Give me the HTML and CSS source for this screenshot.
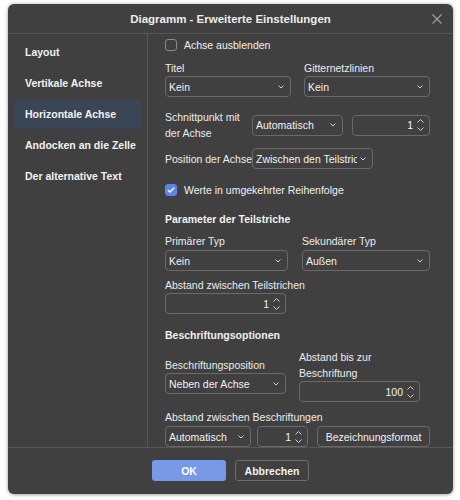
FILE: index.html
```html
<!DOCTYPE html>
<html lang="de">
<head>
<meta charset="utf-8">
<title>Diagramm - Erweiterte Einstellungen</title>
<link rel="stylesheet" href="styles.css">
</head>
<body>
<div class="dialog">
  <div class="header">
    <div class="title">Diagramm - Erweiterte Einstellungen</div>
    <svg class="close" width="10" height="10" viewBox="0 0 10 10"><path d="M0.5 0.5L9.5 9.5M9.5 0.5L0.5 9.5" stroke="#a0a0a0" stroke-width="1.2"/></svg>
  </div>
  <div class="main">
    <div class="sidebar">
      <div class="nav">Layout</div>
      <div class="nav">Vertikale Achse</div>
      <div class="nav active">Horizontale Achse</div>
      <div class="nav">Andocken an die Zelle</div>
      <div class="nav">Der alternative Text</div>
    </div>
    <div class="content">
      <div class="check-row first"><span class="cb"></span><span>Achse ausblenden</span></div>

      <div class="two-col g1">
        <div class="field w126">
          <div class="label">Titel</div>
          <div class="select"><span class="val">Kein</span><svg class="chev" width="6" height="4" viewBox="0 0 6 4"><path d="M0.5 0.5L3 3L5.5 0.5" fill="none" stroke="#cfcfcf" stroke-width="1"/></svg></div>
        </div>
        <div class="field w126">
          <div class="label">Gitternetzlinien</div>
          <div class="select"><span class="val">Kein</span><svg class="chev" width="6" height="4" viewBox="0 0 6 4"><path d="M0.5 0.5L3 3L5.5 0.5" fill="none" stroke="#cfcfcf" stroke-width="1"/></svg></div>
        </div>
      </div>

      <div class="inline-row r1">
        <div class="ilabel">Schnittpunkt mit der Achse</div>
        <div class="select w91"><span class="val">Automatisch</span><svg class="chev" width="6" height="4" viewBox="0 0 6 4"><path d="M0.5 0.5L3 3L5.5 0.5" fill="none" stroke="#cfcfcf" stroke-width="1"/></svg></div>
        <div class="spin w78"><span class="num">1</span><span class="arrows"><svg width="7" height="4" viewBox="0 0 7 4"><path d="M0.5 3.5L3.5 0.5L6.5 3.5" fill="none" stroke="#cfcfcf" stroke-width="1"/></svg><svg width="7" height="4" viewBox="0 0 7 4"><path d="M0.5 0.5L3.5 3.5L6.5 0.5" fill="none" stroke="#cfcfcf" stroke-width="1"/></svg></span></div>
      </div>

      <div class="inline-row r2">
        <div class="ilabel nowrap">Position der Achse</div>
        <div class="select w121"><span class="val">Zwischen den Teilstrichen</span><svg class="chev" width="6" height="4" viewBox="0 0 6 4"><path d="M0.5 0.5L3 3L5.5 0.5" fill="none" stroke="#cfcfcf" stroke-width="1"/></svg></div>
      </div>

      <div class="check-row c2"><span class="cb checked"><svg width="8" height="6" viewBox="0 0 8 6"><path d="M0.8 3L3 5L7.2 0.8" fill="none" stroke="#fff" stroke-width="1.4"/></svg></span><span>Werte in umgekehrter Reihenfolge</span></div>

      <div class="heading h1">Parameter der Teilstriche</div>

      <div class="two-col g2">
        <div class="field w123">
          <div class="label">Primärer Typ</div>
          <div class="select"><span class="val">Kein</span><svg class="chev" width="6" height="4" viewBox="0 0 6 4"><path d="M0.5 0.5L3 3L5.5 0.5" fill="none" stroke="#cfcfcf" stroke-width="1"/></svg></div>
        </div>
        <div class="field w128">
          <div class="label">Sekundärer Typ</div>
          <div class="select"><span class="val">Außen</span><svg class="chev" width="6" height="4" viewBox="0 0 6 4"><path d="M0.5 0.5L3 3L5.5 0.5" fill="none" stroke="#cfcfcf" stroke-width="1"/></svg></div>
        </div>
      </div>

      <div class="field w121 f3">
        <div class="label">Abstand zwischen Teilstrichen</div>
        <div class="spin"><span class="num">1</span><span class="arrows"><svg width="7" height="4" viewBox="0 0 7 4"><path d="M0.5 3.5L3.5 0.5L6.5 3.5" fill="none" stroke="#cfcfcf" stroke-width="1"/></svg><svg width="7" height="4" viewBox="0 0 7 4"><path d="M0.5 0.5L3.5 3.5L6.5 0.5" fill="none" stroke="#cfcfcf" stroke-width="1"/></svg></span></div>
      </div>

      <div class="heading h2">Beschriftungsoptionen</div>

      <div class="two-col g3">
        <div class="field w121">
          <div class="label tall">Beschriftungsposition</div>
          <div class="select"><span class="val">Neben der Achse</span><svg class="chev" width="6" height="4" viewBox="0 0 6 4"><path d="M0.5 0.5L3 3L5.5 0.5" fill="none" stroke="#cfcfcf" stroke-width="1"/></svg></div>
        </div>
        <div class="field w121">
          <div class="label tall">Abstand bis zur<br>Beschriftung</div>
          <div class="spin"><span class="num">100</span><span class="arrows"><svg width="7" height="4" viewBox="0 0 7 4"><path d="M0.5 3.5L3.5 0.5L6.5 3.5" fill="none" stroke="#cfcfcf" stroke-width="1"/></svg><svg width="7" height="4" viewBox="0 0 7 4"><path d="M0.5 0.5L3.5 3.5L6.5 0.5" fill="none" stroke="#cfcfcf" stroke-width="1"/></svg></span></div>
        </div>
      </div>

      <div class="label l4">Abstand zwischen Beschriftungen</div>
      <div class="last-row">
        <div class="select w86"><span class="val">Automatisch</span><svg class="chev" width="6" height="4" viewBox="0 0 6 4"><path d="M0.5 0.5L3 3L5.5 0.5" fill="none" stroke="#cfcfcf" stroke-width="1"/></svg></div>
        <div class="spin w51"><span class="num">1</span><span class="arrows"><svg width="7" height="4" viewBox="0 0 7 4"><path d="M0.5 3.5L3.5 0.5L6.5 3.5" fill="none" stroke="#cfcfcf" stroke-width="1"/></svg><svg width="7" height="4" viewBox="0 0 7 4"><path d="M0.5 0.5L3.5 3.5L6.5 0.5" fill="none" stroke="#cfcfcf" stroke-width="1"/></svg></span></div>
        <div class="btn-plain">Bezeichnungsformat</div>
      </div>
    </div>
  </div>
  <div class="footer">
    <div class="btn ok">OK</div>
    <div class="btn cancel">Abbrechen</div>
  </div>
</div>
</body>
</html>
```

FILE: styles.css
```css
* { box-sizing: border-box; }
html, body { margin: 0; padding: 0; background: #ffffff; }
body {
  font-family: "Liberation Sans", Arial, sans-serif;
  font-size: 10.5px;
  color: #f0f0f0;
  width: 460px;
  height: 500px;
  overflow: hidden;
}
.dialog {
  margin: 4px 0 0 8px;
  width: 445px;
  height: 490px;
  background: #404040;
  border-radius: 6px;
  box-shadow: 0 0 4px rgba(0,0,0,0.25), 0 1px 3px rgba(0,0,0,0.2);
  display: flex;
  flex-direction: column;
  overflow: hidden;
}
.header {
  height: 30px;
  border-bottom: 1px solid #565656;
  position: relative;
  display: flex;
  align-items: center;
  justify-content: center;
  flex: none;
}
.title {
  font-weight: bold;
  font-size: 11.5px;
  color: #ececec;
}
.close {
  position: absolute;
  right: 11px;
  top: 10px;
}
.main {
  flex: 1;
  display: flex;
  min-height: 0;
}
.sidebar {
  width: 140px;
  flex: none;
  border-right: 1px solid #565656;
  padding: 4px 5px 0 6px;
  display: flex;
  flex-direction: column;
  gap: 2px;
}
.nav {
  height: 29px;
  line-height: 29px;
  padding-left: 11px;
  font-weight: bold;
  font-size: 10.5px;
  color: #f2f2f2;
  border-radius: 4px;
  white-space: nowrap;
}
.nav.active { background: #3a4556; }
.content {
  flex: 1;
  padding: 5px 23px 0 17px;
  overflow: hidden;
  display: flex;
  flex-direction: column;
}
.check-row {
  display: flex;
  align-items: center;
  gap: 7px;
  height: 12px;
  line-height: 12px;
}
.cb {
  width: 12px;
  height: 12px;
  border: 1px solid #8a8a8a;
  border-radius: 3px;
  flex: none;
  display: flex;
  align-items: center;
  justify-content: center;
}
.cb.checked { background: #5a86e8; border-color: #5a86e8; }
.c2 { margin-top: 15px; }
.two-col { display: flex; gap: 13px; }
.g1 { margin-top: 10px; }
.g2 { margin-top: 8px; gap: 14px; }
.g3 { margin-top: 7px; align-items: center; }
.field { display: flex; flex-direction: column; }
.label { line-height: 14px; height: 14px; margin-bottom: 1px; color: #ececec; white-space: nowrap; }
.label.tall { height: auto; line-height: 16px; margin-bottom: 0; }
.g2 .label { margin-bottom: 2px; }
.w126 { width: 126px; }
.w123 { width: 123px; }
.w128 { width: 128px; }
.w121 { width: 121px; }
.w91 { width: 91px; }
.w78 { width: 78px; }
.w86 { width: 86px; }
.w51 { width: 51px; }
.select, .spin, .btn-plain {
  height: 21px;
  border: 1px solid #6a6a6a;
  border-radius: 4px;
  display: flex;
  align-items: center;
  flex: none;
}
.select { padding: 0 6px 0 3px; }
.select .val { flex: 1; overflow: hidden; white-space: nowrap; color: #f2f2f2; }
.chev { flex: none; margin-left: 3px; }
.spin { padding: 0 5px 0 4px; justify-content: flex-end; }
.num { color: #f2f2f2; margin-right: 4px; }
.arrows { display: flex; flex-direction: column; gap: 4px; }
.arrows svg { display: block; }
.inline-row { display: flex; align-items: center; }
.r1 { margin-top: 12px; height: 32px; gap: 0; }
.r1 .select { margin-right: 9px; }
.r2 { margin-top: 7px; }
.ilabel { width: 87px; flex: none; line-height: 16px; color: #ececec; }
.nowrap { white-space: nowrap; }
.heading { font-weight: bold; line-height: 14px; height: 14px; color: #f0f0f0; }
.h1 { margin-top: 16px; }
.h2 { margin-top: 14px; }
.f3 { margin-top: 7px; }
.l4 { margin-top: 8px; margin-bottom: 2px; }
.last-row { display: flex; gap: 6px; }
.last-row .spin { margin-right: 3px; }
.btn-plain { width: 113px; justify-content: center; color: #f2f2f2; }
.footer {
  height: 47px;
  flex: none;
  border-top: 1px solid #565656;
  display: flex;
  align-items: center;
  justify-content: center;
  gap: 9px;
  padding-bottom: 1px;
}
.btn {
  width: 74px;
  height: 21px;
  border-radius: 3px;
  display: flex;
  align-items: center;
  justify-content: center;
  font-weight: bold;
  font-size: 10.5px;
}
.ok { background: #7799e8; color: #ffffff; }
.cancel { border: 1px solid #6e6e6e; color: #f2f2f2; }
```
